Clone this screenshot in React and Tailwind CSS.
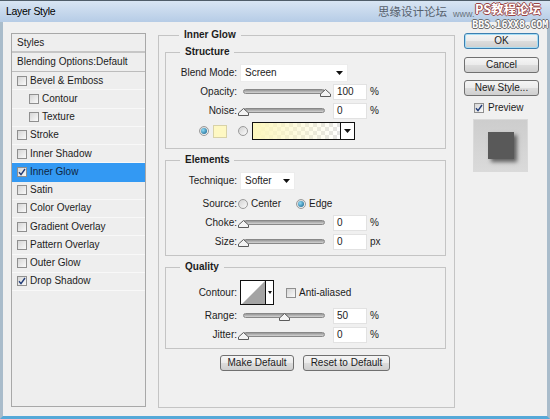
import React from "react";

const styleRows = [
	{ label: "Bevel & Emboss" },
	{ label: "Contour", sub: true },
	{ label: "Texture", sub: true },
	{ label: "Stroke" },
	{ label: "Inner Shadow" },
	{ label: "Inner Glow", checked: true, selected: true },
	{ label: "Satin" },
	{ label: "Color Overlay" },
	{ label: "Gradient Overlay" },
	{ label: "Pattern Overlay" },
	{ label: "Outer Glow" },
	{ label: "Drop Shadow", checked: true },
];

const Check = ({ checked }) => (
	<span className="flex h-[10px] w-[10px] shrink-0 items-center justify-center border border-[#8f8f8f] bg-gradient-to-br from-[#d6d6d6] to-[#fafafa]">
		{checked && (
			<svg width="8" height="8" viewBox="0 0 8 8">
				<path d="M1 4.2 L3 6.6 L7 1" fill="none" stroke="#213c78" strokeWidth="1.4" />
			</svg>
		)}
	</span>
);

const Radio = ({ on }) => (
	<span className="flex h-[10px] w-[10px] shrink-0 items-center justify-center rounded-full border border-[#9a9a9a] bg-gradient-to-br from-[#d2d2d2] to-[#fbfbfb]">
		{on && (
			<span className="h-[6px] w-[6px] rounded-full bg-[radial-gradient(circle_at_35%_35%,#8fdcf7,#0d5a86)]" />
		)}
	</span>
);

const Arrow = () => (
	<svg width="7" height="4" viewBox="0 0 7 4">
		<path d="M0 0h7L3.5 4z" fill="#111" />
	</svg>
);

const Label = ({ children }) => (
	<span className="w-[71px] shrink-0 text-right">{children}</span>
);

const Slider = ({ value }) => (
	<div className="relative ml-px flex h-[19px] w-[92px] shrink-0 items-center px-[5px]">
		<div className="h-[5px] w-full rounded-full border border-[#888888] bg-gradient-to-b from-[#979797] to-[#d4d4d4]" />
		<svg
			className="absolute top-[7px]"
			style={{ left: `${value * 0.82}px` }}
			width="11"
			height="8"
			viewBox="0 0 11 8"
		>
			<path d="M0.5 7.5V5L5.5 0.5L10.5 5V7.5Z" fill="#f4f4f4" stroke="#5b5b5b" />
		</svg>
	</div>
);

const Num = ({ value, unit }) => (
	<>
		<span className="ml-[3px] flex h-[16px] w-[34px] items-center border border-[#e2e2e2] bg-white pl-[3px]">
			{value}
		</span>
		<span className="ml-[3px]">{unit}</span>
	</>
);

const SliderRow = ({ label, value, unit, className = "" }) => (
	<div className={`flex h-[19px] items-center ${className}`}>
		<Label>{label}</Label>
		<Slider value={value} />
		<Num value={value} unit={unit} />
	</div>
);

const Group = ({ title, className = "", children }) => (
	<fieldset className={`border border-[#c4c4c4] ${className}`}>
		<legend className="ml-[14px] px-[5px] text-[10px] font-bold leading-[14px]">
			{title}
		</legend>
		{children}
	</fieldset>
);

const Btn = ({ children, className = "", focus }) => (
	<button
		type="button"
		className={`flex h-[16px] items-center justify-center rounded-[3px] border bg-[linear-gradient(#f5f5f5,#ebebeb_50%,#dddddd_50%,#cfcfcf)] text-[10px] leading-none ${
			focus
				? "border-[#3c7fb1] shadow-[inset_0_0_0_1px_#a6ddf4]"
				: "border-[#707070]"
		} ${className}`}
	>
		{children}
	</button>
);

export default function App() {
	return (
		<div className="flex h-[419px] w-[550px] flex-col overflow-hidden bg-[#f0f0f0] font-[family-name:'Liberation_Sans',Arial,sans-serif] text-[10px] leading-none text-[#1c1c1c]">
			{/* Title bar */}
			<div className="relative flex h-[22px] shrink-0 items-center border-t border-[#4f5d69] bg-gradient-to-b from-[#d8e5f3] to-[#b6cce6] pl-[6px]">
				<span className="text-[10.5px] tracking-[-0.3px] text-black">Layer Style</span>
				<span className="ml-auto mr-[103px] font-[family-name:'Noto_Sans_CJK_SC',sans-serif] text-[11.5px] text-[#56606c]">
					思缘设计论坛
				</span>
				{/* watermark */}
				<span className="absolute left-[453px] top-[9px] text-[9px] leading-[9px] text-[#6a747e]">
					www.
				</span>
				<span className="absolute right-[9px] top-[1px] font-[family-name:'Noto_Sans_CJK_SC',sans-serif] text-[12.5px] font-bold leading-[14px] text-white [text-shadow:1px_0_0_#9a4444,-1px_0_0_#9a4444,0_1px_0_#9a4444,0_-1px_0_#9a4444]">
					PS教程论坛
				</span>
				<span className="absolute right-[2px] top-[19px] z-10 font-[family-name:'DejaVu_Sans_Mono',monospace] text-[10px] font-bold leading-[9px] tracking-[-0.2px] text-white [text-shadow:1px_0_0_#6b6b6b,-1px_0_0_#6b6b6b,0_1px_0_#6b6b6b,0_-1px_0_#6b6b6b]">
					BBS.16XX8.COM
				</span>
			</div>

			{/* Client area */}
			<div className="flex flex-1 border-x-[3px] border-b-[3px] border-x-[#a9bccb] border-b-[#55a9d8] pl-[8px]">
				{/* Styles list */}
				<div className="mt-[11px] flex h-[374px] w-[135px] shrink-0 flex-col border border-[#a8a8a8] bg-[#eeeeee]">
					<div className="flex h-[17px] items-center pl-[5px]">Styles</div>
					<div className="h-[2px] bg-[#c6c6c6]" />
					<div className="flex h-[19px] items-center border-b border-[#bcbcbc] pl-[5px]">
						Blending Options:Default
					</div>
					{styleRows.map((row) => (
						<div
							key={row.label}
							className={`flex h-[18.25px] items-center gap-[3px] border-b ${
								row.sub ? "pl-[17px]" : "pl-[5px]"
							} ${
								row.selected
									? "border-[#3399f3] bg-[#3399f3] text-[#0f2540]"
									: "border-[#f8f8f8]"
							}`}
						>
							<Check checked={row.checked} />
							<span>{row.label}</span>
						</div>
					))}
				</div>

				{/* Inner Glow settings */}
				<Group title="Inner Glow" className="ml-[12px] mt-[6px] h-[380px] w-[297px] shrink-0 px-[6px]">
					<Group title="Structure" className="mt-[3px] w-[281px] pb-[8px]">
						<div className="mt-[5px] flex h-[18px] items-center">
							<Label>Blend Mode:</Label>
							<span className="ml-[3px] flex h-[18px] w-[108px] items-center justify-between border border-[#ececec] bg-white pl-[4px] pr-[4px]">
								Screen
								<Arrow />
							</span>
						</div>
						<SliderRow label="Opacity:" value={100} unit="%" />
						<SliderRow label="Noise:" value={0} unit="%" />
						<div className="mt-[2px] flex h-[18px] items-center pl-[33px]">
							<Radio on />
							<span className="ml-[4px] h-[13px] w-[14px] border border-[#d8d2a8] bg-[#fef8c3]" />
							<span className="ml-[11px]">
								<Radio />
							</span>
							<div className="ml-[4px] flex h-[18px] w-[103px] border border-[#111]">
								<div className="flex-1 bg-[image:linear-gradient(to_right,#fdf7bd,rgba(253,247,189,0)),repeating-conic-gradient(#e4e4e4_0_25%,#ffffff_0_50%)] bg-[length:100%_100%,8px_8px]" />
								<div className="flex w-[14px] items-center justify-center border-l border-[#111] bg-white">
									<Arrow />
								</div>
							</div>
						</div>
					</Group>

					<Group title="Elements" className="mt-[4px] w-[281px] pb-[4px]">
						<div className="mt-[5px] flex h-[18px] items-center">
							<Label>Technique:</Label>
							<span className="ml-[3px] flex h-[18px] w-[55px] items-center justify-between border border-[#ececec] bg-white pl-[4px] pr-[4px]">
								Softer
								<Arrow />
							</span>
						</div>
						<div className="mt-[4px] flex h-[19px] items-center">
							<Label>Source:</Label>
							<span className="ml-px">
								<Radio />
							</span>
							<span className="ml-[3px]">Center</span>
							<span className="ml-[15px]">
								<Radio on />
							</span>
							<span className="ml-[3px]">Edge</span>
						</div>
						<SliderRow label="Choke:" value={0} unit="%" />
						<SliderRow label="Size:" value={0} unit="px" />
					</Group>

					<Group title="Quality" className="mt-[4px] w-[281px] pb-[4px]">
						<div className="mt-[6px] flex h-[25px] items-center">
							<Label>Contour:</Label>
							<div className="ml-[3px] flex h-[25px] w-[34px] border border-[#111] bg-white">
								<svg width="24" height="23" viewBox="0 0 24 23">
									<path d="M1 23 L24 0 V23 Z" fill="#a4a4a4" />
								</svg>
								<div className="flex flex-1 items-center justify-center border-l border-[#111]">
									<svg width="4" height="3" viewBox="0 0 4 3">
										<path d="M0 0h4L2 3z" fill="#111" />
									</svg>
								</div>
							</div>
							<span className="ml-[12px]">
								<Check />
							</span>
							<span className="ml-[3px]">Anti-aliased</span>
						</div>
						<SliderRow label="Range:" value={50} unit="%" className="mt-px" />
						<SliderRow label="Jitter:" value={0} unit="%" />
					</Group>

					<div className="mt-[6px] flex gap-[9px] pl-[55px]">
						<Btn className="w-[74px]">Make Default</Btn>
						<Btn className="w-[87px]">Reset to Default</Btn>
					</div>
				</Group>

				{/* Right column */}
				<div className="ml-[9px] mt-[11px] flex w-[75px] shrink-0 flex-col">
					<Btn focus className="w-[75px]">
						OK
					</Btn>
					<Btn className="mt-[8px] w-[75px]">Cancel</Btn>
					<Btn className="mt-[7px] w-[75px]">New Style...</Btn>
					<div className="mt-[7px] flex items-center gap-[4px] pl-[10px]">
						<Check checked />
						<span>Preview</span>
					</div>
					<div className="ml-[9px] mt-[6px] flex h-[53px] w-[55px] items-center justify-center border border-[#dadada] bg-gradient-to-b from-[#cdcdcd] to-[#dadada]">
						<div className="h-[27px] w-[26px] bg-[#595959] shadow-[3px_3px_4px_rgba(0,0,0,0.55)]" />
					</div>
				</div>
			</div>
		</div>
	);
}
